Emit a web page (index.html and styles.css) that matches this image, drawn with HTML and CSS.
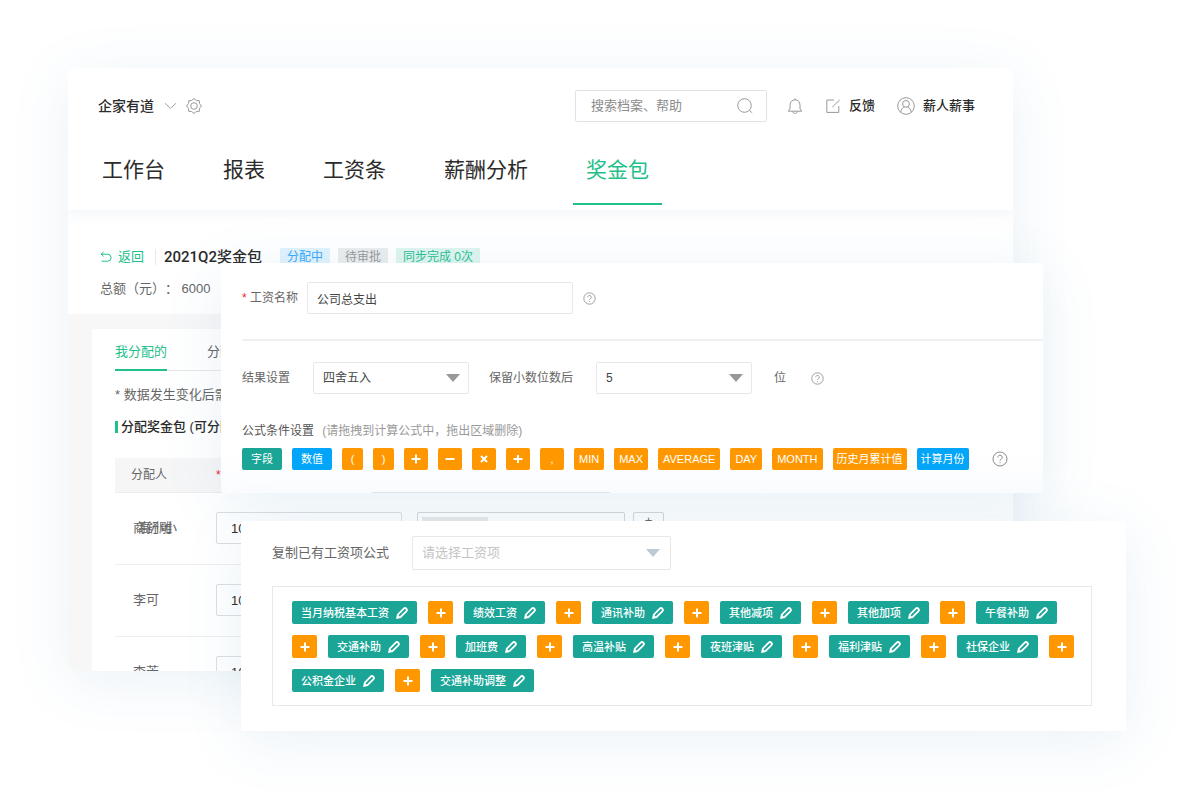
FILE: index.html
```html
<!DOCTYPE html>
<html lang="zh-CN">
<head>
  <meta charset="UTF-8" />
  <meta name="viewport" content="width=device-width,initial-scale=1" />
  <title>奖金包</title>
  <link rel="stylesheet" href="styles.css">
</head>

<body>
  <!-- shared icons -->
  <svg class="sprite" aria-hidden="true">
    <symbol id="i-help" viewBox="0 0 16 16">
      <circle cx="8" cy="8" r="7" />
      <path d="M5.8 6.4a2.2 2.2 0 1 1 3.4 1.8c-.8.5-1.2.8-1.2 1.6M8 11.2v1" />
    </symbol>
    <symbol id="i-pen" viewBox="0 0 12 12">
      <path d="M1.2 10.8l.6-3.2L7.7 1.7a1.8 1.8 0 0 1 2.6 2.6L4.4 10.2z" />
      <path d="M1.2 10.8l1.8-1.8" />
    </symbol>
    <symbol id="i-plus" viewBox="0 0 12 12"><path d="M6 1.5v9M1.5 6h9" /></symbol>
    <symbol id="i-minus" viewBox="0 0 12 12"><path d="M1.5 6h9" /></symbol>
    <symbol id="i-times" viewBox="0 0 12 12"><path d="M3 3l6 6M9 3l-6 6" /></symbol>
    <symbol id="i-divide" viewBox="0 0 12 12"><path d="M1.5 6h9M6 2v3.2M6 6.8V10" /></symbol>
  </svg>

  <div class="stage">
    <main class="window">
      <header class="header">
        <div class="topbar">
          <button class="company" type="button">企家有道
            <svg class="icon chevron" viewBox="0 0 14 8"><path d="M1 1l6 5.5L13 1" /></svg>
          </button>
          <button class="icon-btn" type="button" aria-label="设置">
            <svg class="icon icon-md" viewBox="0 0 16 16">
              <path stroke-linejoin="round" d="M15.5 8l-2 2.3-.2 3-3 .2L8 15.5l-2.3-2-3-.2-.2-3L.5 8l2-2.3.2-3 3-.2L8 .5l2.3 2 3 .2.2 3z" />
              <circle cx="8" cy="8" r="3.3" />
            </svg>
          </button>
          <div class="search">
            <input type="text" placeholder="搜索档案、帮助" aria-label="搜索" />
            <svg class="icon icon-md" viewBox="0 0 16 16"><circle cx="7.5" cy="7.5" r="6.8" /><path d="M12.4 12.4l2.8 2.4" /></svg>
          </div>
          <button class="icon-btn bell" type="button" aria-label="通知">
            <svg class="icon icon-md" viewBox="0 0 16 16">
              <path d="M8 .4v1.4M3 11V7.2C3 4 5 1.8 8 1.8s5 2.2 5 5.4V11l1.8 2.2H1.2zM5.8 13.4c.2 1.3 1 2 2.2 2s2-.7 2.2-2" />
            </svg>
          </button>
          <a class="top-link" href="#feedback">
            <svg class="icon icon-md" viewBox="0 0 16 16"><path d="M9 2H1.8v12.4h12V8M7.4 9L14.6 2" /></svg>反馈
          </a>
          <a class="top-link" href="#account">
            <svg class="icon icon-lg" viewBox="0 0 18 18">
              <circle cx="9" cy="9" r="8.3" /><circle cx="9" cy="6.9" r="3.4" />
              <path d="M3.8 15.2c.3-2.8 1.8-4.4 3.6-5.2M14.2 15.2c-.3-2.8-1.8-4.4-3.6-5.2" />
            </svg>薪人薪事
          </a>
        </div>
        <nav class="nav">
          <a href="#desk">工作台</a>
          <a href="#report">报表</a>
          <a href="#payslip">工资条</a>
          <a href="#analysis">薪酬分析</a>
          <a href="#bonus" class="active">奖金包</a>
        </nav>
      </header>

      <section class="summary">
        <div class="summary-row">
          <a class="back" href="#back">
            <svg class="icon" viewBox="0 0 12 12"><path d="M3.6 1L1.2 3.2l2.4 2.2M1.2 3.2h6.4a3.5 3.5 0 0 1 0 7H1.6" /></svg>返回
          </a>
          <h1>2021Q2奖金包</h1>
          <span class="badge badge-blue">分配中</span>
          <span class="badge badge-gray">待审批</span>
          <span class="badge badge-green">同步完成 0次</span>
        </div>
        <p class="total">总额（元）： 6000</p>
      </section>

      <section class="content">
        <div class="card">
          <nav class="tabs">
            <a href="#mine" class="active">我分配的</a>
            <a href="#others">分配给我的</a>
          </nav>
          <p class="note">* 数据发生变化后需要重新同步</p>
          <h2>分配奖金包 (可分配)</h2>
          <table class="people">
            <thead>
              <tr><th class="col-name">分配人</th><th class="col-money"><span class="req">*</span></th><th></th></tr>
            </thead>
            <tbody>
              <tr>
                <td class="overlap"><span>商舒雕</span><span>高小小</span></td>
                <td><input class="money" type="text" value="1000" aria-label="金额" /></td>
                <td>
                  <div class="picker">
                    <div class="picker-box"><span class="picked"></span></div>
                    <button class="add" type="button" aria-label="添加">+</button>
                  </div>
                </td>
              </tr>
              <tr>
                <td>李可</td>
                <td><input class="money" type="text" value="1000" aria-label="金额" /></td>
                <td></td>
              </tr>
              <tr>
                <td>李芳</td>
                <td><input class="money" type="text" value="1000" aria-label="金额" /></td>
                <td></td>
              </tr>
            </tbody>
          </table>
        </div>
      </section>
    </main>

    <section class="panel formula">
      <div class="field-row name-row">
        <label for="itemName"><span class="req">*</span> 工资名称</label>
        <input id="itemName" type="text" value="公司总支出" />
        <svg class="icon help"><use href="#i-help" /></svg>
      </div>
      <div class="field-row result-row">
        <label for="rounding">结果设置</label>
        <span class="select">
          <select id="rounding"><option>四舍五入</option></select>
        </span>
        <label for="digits" class="digits-label">保留小数位数后</label>
        <span class="select">
          <select id="digits"><option>5</option></select>
        </span>
        <span class="unit">位</span>
        <svg class="icon help"><use href="#i-help" /></svg>
      </div>
      <p class="cond-title">公式条件设置 <span>(请拖拽到计算公式中，拖出区域删除)</span></p>
      <div class="tokens">
        <button class="token teal wide" type="button">字段</button>
        <button class="token blue wide" type="button">数值</button>
        <button class="token" type="button">(</button>
        <button class="token" type="button">)</button>
        <button class="token op" type="button" aria-label="加"><svg><use href="#i-plus" /></svg></button>
        <button class="token op" type="button" aria-label="减"><svg><use href="#i-minus" /></svg></button>
        <button class="token op" type="button" aria-label="乘"><svg><use href="#i-times" /></svg></button>
        <button class="token op" type="button" aria-label="除"><svg><use href="#i-divide" /></svg></button>
        <button class="token op" type="button">,</button>
        <button class="token" type="button">MIN</button>
        <button class="token" type="button">MAX</button>
        <button class="token" type="button">AVERAGE</button>
        <button class="token" type="button">DAY</button>
        <button class="token" type="button">MONTH</button>
        <button class="token narrow" type="button">历史月累计值</button>
        <button class="token blue narrow" type="button">计算月份</button>
        <svg class="icon help help-lg"><use href="#i-help" /></svg>
      </div>
      <div class="next-field"></div>
    </section>

    <section class="panel copy">
      <div class="field-row copy-row">
        <label for="source">复制已有工资项公式</label>
        <span class="select select-lg">
          <select id="source"><option>请选择工资项</option></select>
        </span>
      </div>
      <div class="expression">
        <button class="item" type="button">当月纳税基本工资<svg><use href="#i-pen" /></svg></button>
        <button class="plus" type="button" aria-label="加"><svg><use href="#i-plus" /></svg></button>
        <button class="item" type="button">绩效工资<svg><use href="#i-pen" /></svg></button>
        <button class="plus" type="button" aria-label="加"><svg><use href="#i-plus" /></svg></button>
        <button class="item" type="button">通讯补助<svg><use href="#i-pen" /></svg></button>
        <button class="plus" type="button" aria-label="加"><svg><use href="#i-plus" /></svg></button>
        <button class="item" type="button">其他减项<svg><use href="#i-pen" /></svg></button>
        <button class="plus" type="button" aria-label="加"><svg><use href="#i-plus" /></svg></button>
        <button class="item" type="button">其他加项<svg><use href="#i-pen" /></svg></button>
        <button class="plus" type="button" aria-label="加"><svg><use href="#i-plus" /></svg></button>
        <button class="item" type="button">午餐补助<svg><use href="#i-pen" /></svg></button>
        <button class="plus" type="button" aria-label="加"><svg><use href="#i-plus" /></svg></button>
        <button class="item" type="button">交通补助<svg><use href="#i-pen" /></svg></button>
        <button class="plus" type="button" aria-label="加"><svg><use href="#i-plus" /></svg></button>
        <button class="item" type="button">加班费<svg><use href="#i-pen" /></svg></button>
        <button class="plus" type="button" aria-label="加"><svg><use href="#i-plus" /></svg></button>
        <button class="item" type="button">高温补贴<svg><use href="#i-pen" /></svg></button>
        <button class="plus" type="button" aria-label="加"><svg><use href="#i-plus" /></svg></button>
        <button class="item" type="button">夜班津贴<svg><use href="#i-pen" /></svg></button>
        <button class="plus" type="button" aria-label="加"><svg><use href="#i-plus" /></svg></button>
        <button class="item" type="button">福利津贴<svg><use href="#i-pen" /></svg></button>
        <button class="plus" type="button" aria-label="加"><svg><use href="#i-plus" /></svg></button>
        <button class="item" type="button">社保企业<svg><use href="#i-pen" /></svg></button>
        <button class="plus" type="button" aria-label="加"><svg><use href="#i-plus" /></svg></button>
        <button class="item" type="button">公积金企业<svg><use href="#i-pen" /></svg></button>
        <button class="plus" type="button" aria-label="加"><svg><use href="#i-plus" /></svg></button>
        <button class="item" type="button">交通补助调整<svg><use href="#i-pen" /></svg></button>
      </div>
    </section>
  </div>
</body>
</html>
```

FILE: styles.css
```css
:root {
  --green: #1fc08a;
  --teal: #1aa597;
  --blue: #03a5f9;
  --orange: #ff9800;
  --red: #f5222d;
  --text: #2b2b2b;
  --label: #666;
  --muted: #999;
  --line: #e8e8e8;
  --shadow: 0 10px 60px rgba(60, 140, 180, 0.11);
}

*, *::before, *::after {
  box-sizing: border-box;
}
body {
  margin: 0;
  background: #fff;
  color: var(--text);
  font: 13px/20px "Liberation Sans", "Noto Sans CJK SC", sans-serif;
  text-spacing-trim: space-all;
}
h1, h2, p {
  margin: 0;
}
a {
  color: inherit;
  text-decoration: none;
}
button, input, select {
  font: inherit;
  color: inherit;
  padding: 0;
  border: 0;
  background: none;
}
.sprite {
  display: none;
}
svg {
  fill: none;
  stroke: currentColor;
  flex: none;
}

.stage {
  position: relative;
  min-height: 100vh;
  padding: 68px 182px 0 68px;
  overflow: hidden;
}

/* main window */
.window {
  height: calc(100vh - 196px);
  border-radius: 8px;
  background: #fff;
  box-shadow: var(--shadow);
  overflow: hidden;
}
.header {
  position: relative;
  height: 142px;
  padding: 22px 21px 0;
  box-shadow: 0 4px 12px rgba(90, 130, 160, 0.08);
}
.topbar {
  display: flex;
  align-items: center;
  height: 32px;
  padding: 0 17px 0 9px;
}
.icon {
  width: 12px;
  height: 12px;
  color: #999;
}
.icon-md {
  width: 16px;
  height: 16px;
}
.icon-lg {
  width: 18px;
  height: 18px;
}
.icon-btn {
  display: flex;
}
.company {
  display: flex;
  align-items: center;
  gap: 10px;
  margin-right: 9px;
  font-size: 14px;
  font-weight: 500;
}
.chevron {
  width: 13px;
  height: 8px;
}
.search {
  display: flex;
  align-items: center;
  width: 192px;
  height: 32px;
  margin-left: auto;
  padding: 0 13px 0 15px;
  border: 1px solid #e2e2e2;
  border-radius: 2px;
}
.search input {
  flex: 1;
  min-width: 0;
  outline: none;
}
.search input::placeholder {
  color: #8c8c8c;
  opacity: 1;
}
.bell {
  margin-left: 20px;
}
.top-link {
  display: flex;
  align-items: center;
  gap: 8px;
  margin-left: 22px;
  font-weight: 500;
}
.nav {
  display: flex;
  gap: 32px;
  margin-top: 13px;
}
.nav a {
  height: 70px;
  padding: 0 13px;
  font-size: 21px;
  line-height: 70px;
}
.nav .active {
  color: var(--green);
  border-bottom: 2px solid var(--green);
}

.summary {
  height: 104px;
  padding: 37px 32px 0;
}
.summary-row {
  display: flex;
  align-items: center;
  height: 20px;
}
.back {
  display: flex;
  align-items: center;
  gap: 6px;
  padding-right: 11px;
  border-right: 1px solid var(--line);
  line-height: 16px;
  color: var(--green);
}
.back .icon {
  color: var(--green);
}
h1 {
  margin: 0 10px 0 8px;
  font: 500 15px/20px Roboto, "Noto Sans CJK SC", sans-serif;
}
.badge {
  margin-left: 8px;
  padding: 0 7px;
  font-size: 12px;
  line-height: 18px;
}
.badge-blue {
  color: #36a9f8;
  background: #e1f2fe;
}
.badge-gray {
  color: #999;
  background: #ebedee;
}
.badge-green {
  color: #2bbf90;
  background: #def5ef;
}
.total {
  margin-top: 12px;
  color: var(--label);
}

.content {
  padding: 15px 0 0 24px;
  background: #f7f7f8;
}
.card {
  height: 600px;
  padding: 0 23px;
  border-radius: 3px;
  background: #fff;
}
.tabs {
  display: flex;
  gap: 40px;
  height: 42px;
  border-bottom: 1px solid var(--line);
  color: var(--label);
}
.tabs a {
  height: 42px;
  line-height: 46px;
}
.tabs .active {
  color: var(--green);
  border-bottom: 2px solid var(--green);
}
.note {
  margin-top: 14px;
  color: var(--label);
}
h2 {
  margin: 16px 0 25px;
  padding-left: 3px;
  border-left: 3px solid var(--green);
  font-size: 13px;
  font-weight: 500;
  line-height: 12px;
}

.people {
  width: 100%;
  border-collapse: collapse;
  table-layout: fixed;
  color: var(--label);
}
.people th {
  height: 34px;
  padding: 0;
  background: #f6f6f7;
  border-bottom: 1px solid #ededed;
  font-size: 12px;
  font-weight: 400;
  text-align: left;
}
.people .col-name {
  width: 101px;
  padding-left: 16px;
}
.people .col-money {
  width: 201px;
}
.people td {
  height: 72px;
  padding: 0;
  border-bottom: 1px solid #ededed;
}
.people td:first-child {
  padding-left: 18px;
}
.people .overlap {
  padding-left: 16px;
}
.overlap span {
  display: inline-block;
}
.overlap span + span {
  margin-left: -34px;
}
.money {
  display: block;
  width: 186px;
  height: 32px;
  padding-left: 14px;
  border: 1px solid #dcdfe1;
  border-radius: 2px;
  color: var(--text);
}
.req {
  color: var(--red);
}
.picker {
  display: flex;
  gap: 8px;
}
.picker-box {
  width: 208px;
  height: 32px;
  padding: 4px;
  border: 1px solid #d4d8db;
  border-radius: 2px;
}
.picked {
  display: block;
  width: 66px;
  height: 22px;
  background: #ebebeb;
}
.add {
  width: 31px;
  height: 32px;
  padding-bottom: 14px;
  border: 1px solid #d4d8db;
  border-radius: 2px;
  line-height: 16px;
}

/* floating panels */
.panel {
  position: absolute;
  border-radius: 3px;
  background: #fff;
  box-shadow: var(--shadow);
  color: var(--label);
}
.formula {
  top: 263px;
  left: 221px;
  right: 152px;
  background: linear-gradient(#fff 80%, #fbfcfe);
  font-size: 12px;
}
.copy {
  top: 521px;
  left: 241px;
  right: 69px;
  padding: 15px 34px 25px 31px;
}
.field-row {
  display: flex;
  align-items: center;
}
.help {
  width: 13px;
  height: 13px;
  color: #8a8a8a;
}
.help-lg {
  width: 16px;
  height: 16px;
  margin-left: 13px;
}
.name-row {
  margin-left: 21px;
  padding: 19px 0 25px;
  border-bottom: 2px solid #f0f0f0;
}
.name-row input {
  width: 266px;
  height: 32px;
  margin: 0 10px 0 9px;
  padding-left: 9px;
  border: 1px solid var(--line);
  border-radius: 2px;
  color: #444;
}
.result-row {
  padding: 21px 21px 0;
}
.select {
  display: grid;
  align-items: center;
  width: 156px;
  height: 32px;
  margin-left: 23px;
  border: 1px solid var(--line);
  border-radius: 2px;
  color: #444;
}
.select select {
  grid-area: 1 / 1;
  width: 100%;
  height: 100%;
  padding-left: 9px;
  appearance: none;
}
.select::after {
  content: "";
  grid-area: 1 / 1;
  justify-self: end;
  margin-right: 8px;
  border: solid transparent;
  border-width: 8px 7px 0;
  border-top-color: #97989c;
  pointer-events: none;
}
.digits-label {
  margin-left: 20px;
}
.unit {
  margin: 0 25px 0 22px;
}
.cond-title {
  padding: 27px 21px 0;
  color: #555;
}
.cond-title span {
  margin-left: 5px;
  color: var(--muted);
}
.tokens {
  display: flex;
  align-items: center;
  gap: 10px;
  padding: 7px 21px 0;
}
.token {
  min-width: 21px;
  height: 22px;
  padding: 0 5px;
  border-radius: 2px;
  background: var(--orange);
  color: #fff;
  font-size: 11px;
  line-height: 22px;
}
.token svg, .plus svg {
  display: block;
  width: 12px;
  height: 12px;
  margin: auto;
  stroke-width: 2;
}
.op {
  width: 24px;
}
.wide {
  padding: 0 9px;
}
.narrow {
  padding: 0 4px;
}
.teal {
  background: var(--teal);
}
.blue {
  background: var(--blue);
}
.next-field {
  width: 238px;
  height: 1px;
  margin: 22px 0 0 151px;
  background: #e2e4e6;
}

.select-lg {
  width: 259px;
  height: 34px;
  color: #c4c4c4;
}
.select-lg::after {
  margin-right: 10px;
  border-top-color: #bccad6;
}
.expression {
  display: flex;
  flex-wrap: wrap;
  gap: 11px;
  margin-top: 16px;
  padding: 14px 16px 13px 19px;
  border: 1px solid var(--line);
}
.item {
  display: flex;
  align-items: center;
  gap: 7px;
  height: 23px;
  padding: 0 9px;
  border-radius: 2px;
  background: var(--teal);
  color: #fff;
  font-size: 11px;
  font-weight: 500;
}
.item svg {
  width: 12px;
  height: 12px;
  stroke-width: 1.8;
}
.plus {
  width: 25px;
  height: 23px;
  border-radius: 2px;
  background: var(--orange);
  color: #fff;
}
```
